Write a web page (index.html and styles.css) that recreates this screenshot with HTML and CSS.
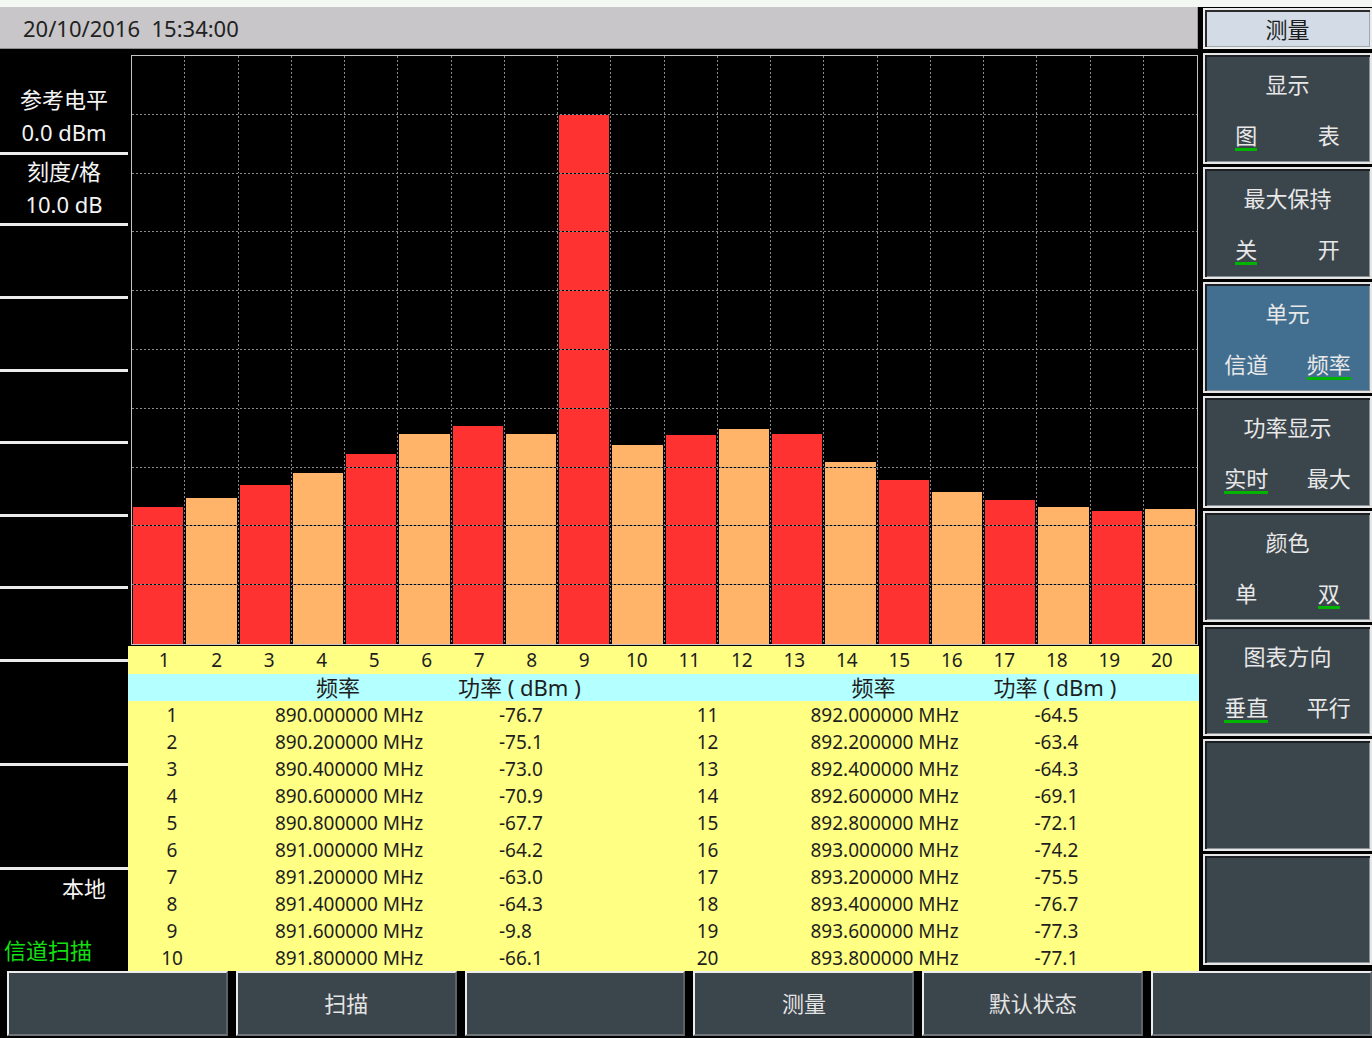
FILE: index.html
```html
<!DOCTYPE html>
<html lang="zh-CN">
<head>
<meta charset="utf-8">
<title>信道扫描</title>
<link rel="stylesheet" href="styles.css">
</head>
<body>
<div class="screen">
  <div class="topstrip"></div>
  <div class="middle">
    <div class="main">
      <div class="header">20/10/2016  15:34:00</div>
      <div class="content">
        <div class="leftpanel">
          <div class="lp lp-ref"><div>参考电平</div><div>0.0 dBm</div></div>
          <div class="lp lp-scale"><div>刻度/格</div><div>10.0 dB</div></div>
          <div class="lp lp-70"></div>
          <div class="lp lp-70"></div>
          <div class="lp lp-69"></div>
          <div class="lp lp-70"></div>
          <div class="lp lp-69"></div>
          <div class="lp lp-70"></div>
          <div class="lp lp-big"></div>
          <div class="lp lp-big"></div>
          <div class="lp lp-last">
            <div class="local">本地</div>
            <div class="mode">信道扫描</div>
          </div>
        </div>
        <div class="plot">
          <div class="chart">
            <div class="bars">
              <div class="bar odd" style="height:23.3%"></div>
              <div class="bar even" style="height:24.9%"></div>
              <div class="bar odd" style="height:27.0%"></div>
              <div class="bar even" style="height:29.1%"></div>
              <div class="bar odd" style="height:32.3%"></div>
              <div class="bar even" style="height:35.8%"></div>
              <div class="bar odd" style="height:37.0%"></div>
              <div class="bar even" style="height:35.7%"></div>
              <div class="bar odd" style="height:90.2%"></div>
              <div class="bar even" style="height:33.9%"></div>
              <div class="bar odd" style="height:35.5%"></div>
              <div class="bar even" style="height:36.6%"></div>
              <div class="bar odd" style="height:35.7%"></div>
              <div class="bar even" style="height:30.9%"></div>
              <div class="bar odd" style="height:27.9%"></div>
              <div class="bar even" style="height:25.8%"></div>
              <div class="bar odd" style="height:24.5%"></div>
              <div class="bar even" style="height:23.3%"></div>
              <div class="bar odd" style="height:22.7%"></div>
              <div class="bar even" style="height:22.9%"></div>
            </div>
            <div class="grid-v">
              <div></div><div></div><div></div><div></div><div></div>
              <div></div><div></div><div></div><div></div><div></div>
              <div></div><div></div><div></div><div></div><div></div>
              <div></div><div></div><div></div><div></div><div></div>
            </div>
            <div class="grid-h">
              <div></div><div></div><div></div><div></div><div></div>
              <div></div><div></div><div></div><div></div><div></div>
            </div>
          </div>
          <div class="axis">
            <span>1</span><span>2</span><span>3</span><span>4</span><span>5</span>
            <span>6</span><span>7</span><span>8</span><span>9</span><span>10</span>
            <span>11</span><span>12</span><span>13</span><span>14</span><span>15</span>
            <span>16</span><span>17</span><span>18</span><span>19</span><span>20</span>
          </div>
          <div class="thead">
            <div class="thead-half"><span></span><span>频率</span><span>功率 ( dBm )</span></div>
            <div class="thead-half"><span></span><span>频率</span><span>功率 ( dBm )</span></div>
          </div>
          <div class="tbody">
            <div class="tcol">
              <div class="row"><span class="idx">1</span><span class="freq">890.000000 MHz</span><span>-76.7</span></div>
              <div class="row"><span class="idx">2</span><span class="freq">890.200000 MHz</span><span>-75.1</span></div>
              <div class="row"><span class="idx">3</span><span class="freq">890.400000 MHz</span><span>-73.0</span></div>
              <div class="row"><span class="idx">4</span><span class="freq">890.600000 MHz</span><span>-70.9</span></div>
              <div class="row"><span class="idx">5</span><span class="freq">890.800000 MHz</span><span>-67.7</span></div>
              <div class="row"><span class="idx">6</span><span class="freq">891.000000 MHz</span><span>-64.2</span></div>
              <div class="row"><span class="idx">7</span><span class="freq">891.200000 MHz</span><span>-63.0</span></div>
              <div class="row"><span class="idx">8</span><span class="freq">891.400000 MHz</span><span>-64.3</span></div>
              <div class="row"><span class="idx">9</span><span class="freq">891.600000 MHz</span><span>-9.8</span></div>
              <div class="row"><span class="idx">10</span><span class="freq">891.800000 MHz</span><span>-66.1</span></div>
            </div>
            <div class="tcol">
              <div class="row"><span class="idx">11</span><span class="freq">892.000000 MHz</span><span>-64.5</span></div>
              <div class="row"><span class="idx">12</span><span class="freq">892.200000 MHz</span><span>-63.4</span></div>
              <div class="row"><span class="idx">13</span><span class="freq">892.400000 MHz</span><span>-64.3</span></div>
              <div class="row"><span class="idx">14</span><span class="freq">892.600000 MHz</span><span>-69.1</span></div>
              <div class="row"><span class="idx">15</span><span class="freq">892.800000 MHz</span><span>-72.1</span></div>
              <div class="row"><span class="idx">16</span><span class="freq">893.000000 MHz</span><span>-74.2</span></div>
              <div class="row"><span class="idx">17</span><span class="freq">893.200000 MHz</span><span>-75.5</span></div>
              <div class="row"><span class="idx">18</span><span class="freq">893.400000 MHz</span><span>-76.7</span></div>
              <div class="row"><span class="idx">19</span><span class="freq">893.600000 MHz</span><span>-77.3</span></div>
              <div class="row"><span class="idx">20</span><span class="freq">893.800000 MHz</span><span>-77.1</span></div>
            </div>
          </div>
        </div>
      </div>
    </div>
    <div class="side">
      <div class="topbtn">测量</div>
      <div class="btns">
        <div class="sbtn">
          <div class="title">显示</div>
          <div class="opts"><div class="opt"><span class="sel">图</span></div><div class="opt"><span>表</span></div></div>
        </div>
        <div class="sbtn">
          <div class="title">最大保持</div>
          <div class="opts"><div class="opt"><span class="sel">关</span></div><div class="opt"><span>开</span></div></div>
        </div>
        <div class="sbtn active">
          <div class="title">单元</div>
          <div class="opts"><div class="opt"><span>信道</span></div><div class="opt"><span class="sel">频率</span></div></div>
        </div>
        <div class="sbtn">
          <div class="title">功率显示</div>
          <div class="opts"><div class="opt"><span class="sel">实时</span></div><div class="opt"><span>最大</span></div></div>
        </div>
        <div class="sbtn">
          <div class="title">颜色</div>
          <div class="opts"><div class="opt"><span>单</span></div><div class="opt"><span class="sel">双</span></div></div>
        </div>
        <div class="sbtn">
          <div class="title">图表方向</div>
          <div class="opts"><div class="opt"><span class="sel">垂直</span></div><div class="opt"><span>平行</span></div></div>
        </div>
        <div class="sbtn"></div>
        <div class="sbtn"></div>
      </div>
    </div>
  </div>
  <div class="bottombar">
    <div class="bbtn"></div>
    <div class="bbtn">扫描</div>
    <div class="bbtn"></div>
    <div class="bbtn">测量</div>
    <div class="bbtn">默认状态</div>
    <div class="bbtn"></div>
  </div>
</div>
</body>
</html>
```
FILE: styles.css
```css
* { box-sizing: border-box; margin: 0; padding: 0; }

body {
  margin: 0;
  background: #000;
  font-family: "Noto Sans", "Noto Sans CJK SC", sans-serif;
}

.screen {
  width: 1372px;
  height: 1038px;
  background: #000;
  overflow: hidden;
}

.topstrip {
  height: 7px;
  background: #f3f8f2;
}

.middle {
  display: flex;
  height: 964px;
}

.main {
  width: 1199px;
  display: flex;
  flex-direction: column;
}

.header {
  height: 42px;
  width: 1198px;
  background: #c8c6c8;
  border-bottom: 1px solid #8f8f8f;
  border-right: 1px solid #9a9a9a;
  font-size: 22px;
  line-height: 42px;
  color: #222;
  padding-left: 23px;
  white-space: pre;
}

.content {
  display: flex;
  height: 922px;
}

/* left info panel */
.leftpanel {
  width: 128px;
  display: flex;
  flex-direction: column;
  color: #f4f4f4;
  font-size: 22px;
  text-align: center;
}

.lp {
  border-bottom: 3px solid #ececec;
  line-height: 33px;
}

.lp-ref { height: 106px; padding-top: 34px; }
.lp-scale { height: 71px; }
.lp-70 { height: 73px; }
.lp-69 { height: 72px; }
.lp-big { height: 104px; }
.lp-last {
  height: 101px;
  border-bottom: none;
  padding-top: 3px;
  line-height: 30px;
}

.local {
  text-align: right;
  padding-right: 22px;
}

.mode {
  text-align: left;
  padding-left: 4px;
  margin-top: 32px;
  color: #12e012;
}

/* plot area */
.plot {
  width: 1071px;
  display: flex;
  flex-direction: column;
}

.chart {
  position: relative;
  margin: 6px 1px 1px 3px;
  height: 590px;
  border: 1px solid #c4c4c4;
  background: #000;
}

.bars {
  display: flex;
  align-items: flex-end;
  height: 100%;
}

.bar {
  flex: 1;
  margin: 0 2px 0 1px;
}

.bar.odd { background: #ff3232; }
.bar.even { background: #ffb469; }

.grid-v {
  position: absolute;
  inset: 0;
  display: flex;
}

.grid-v > div {
  flex: 1;
  background: repeating-linear-gradient(to bottom, #8a8a8a 0 2px, #000 2px 4px) right top / 1px 100% no-repeat;
}

.grid-v > div:last-child { background: none; }

.grid-h {
  position: absolute;
  inset: 0;
  display: flex;
  flex-direction: column;
}

.grid-h > div {
  flex: 1;
  background: repeating-linear-gradient(to right, #8a8a8a 0 2px, #000 2px 4px) left bottom / 100% 1px no-repeat;
}

.grid-h > div:last-child { background: none; }

.axis {
  height: 28px;
  background: #ffff84;
  display: grid;
  grid-template-columns: repeat(20, 52.5px);
  padding-left: 10px;
  font-size: 19px;
  line-height: 29px;
  text-align: center;
  color: #1e1e1e;
}

.thead {
  height: 27px;
  background: #b4ffff;
  display: grid;
  grid-template-columns: 1fr 1fr;
  font-size: 22px;
  line-height: 27px;
  color: #1e1e1e;
}

.thead-half {
  display: grid;
  grid-template-columns: 188px 142px 1fr;
  white-space: nowrap;
}

.tbody {
  height: 270px;
  background: #ffff84;
  display: grid;
  grid-template-columns: 1fr 1fr;
  color: #1e1e1e;
}

.tcol {
  display: flex;
  flex-direction: column;
}

.row {
  height: 27px;
  display: grid;
  grid-template-columns: 88px 283px 1fr;
  font-size: 19px;
  line-height: 28px;
  white-space: nowrap;
}

.row .idx { text-align: center; }
.row .freq { padding-left: 59px; }

/* right soft-key panel */
.side {
  width: 170px;
  margin-left: 3px;
  padding: 1px 0 0 1px;
  display: flex;
  flex-direction: column;
}

.topbtn {
  height: 41px;
  margin-bottom: 4px;
  background: #d3dce6;
  border: 2px solid #ececec;
  box-shadow: inset 2px 2px 0 #2b2b2b, inset -1px -1px 0 #a0a8b0;
  text-align: center;
  font-size: 22px;
  line-height: 39px;
  color: #1c1c1c;
}

.btns {
  height: 912px;
  display: flex;
  flex-direction: column;
  gap: 3px;
}

.sbtn {
  flex: 1;
  background: #3b454c;
  border: 2px solid #e6e6e6;
  box-shadow: inset 2px 2px 0 #1c2024, inset -1px -1px 0 #8a9196;
  color: #e8e8e8;
  font-size: 22px;
  text-align: center;
  padding-top: 14px;
}

.sbtn.active { background: #426f90; }

.sbtn .title { line-height: 30px; }

.sbtn .opts {
  display: grid;
  grid-template-columns: 1fr 1fr;
  margin-top: 21px;
}

.opt span {
  display: inline-block;
  line-height: 26px;
  border-bottom: 3px solid transparent;
}

.opt span.sel { border-bottom-color: #00b400; }

/* bottom soft-key bar */
.bottombar {
  height: 67px;
  display: flex;
  gap: 8px;
  padding-left: 7px;
}

.bbtn {
  flex: 1;
  height: 65px;
  background: #3b454c;
  border-top: 2px solid #ececec;
  border-left: 2px solid #ececec;
  border-right: 2px solid #5d6368;
  border-bottom: 2px solid #6e7478;
  color: #e4e4e4;
  font-size: 22px;
  display: flex;
  align-items: center;
  justify-content: center;
  padding-bottom: 3px;
}
```
